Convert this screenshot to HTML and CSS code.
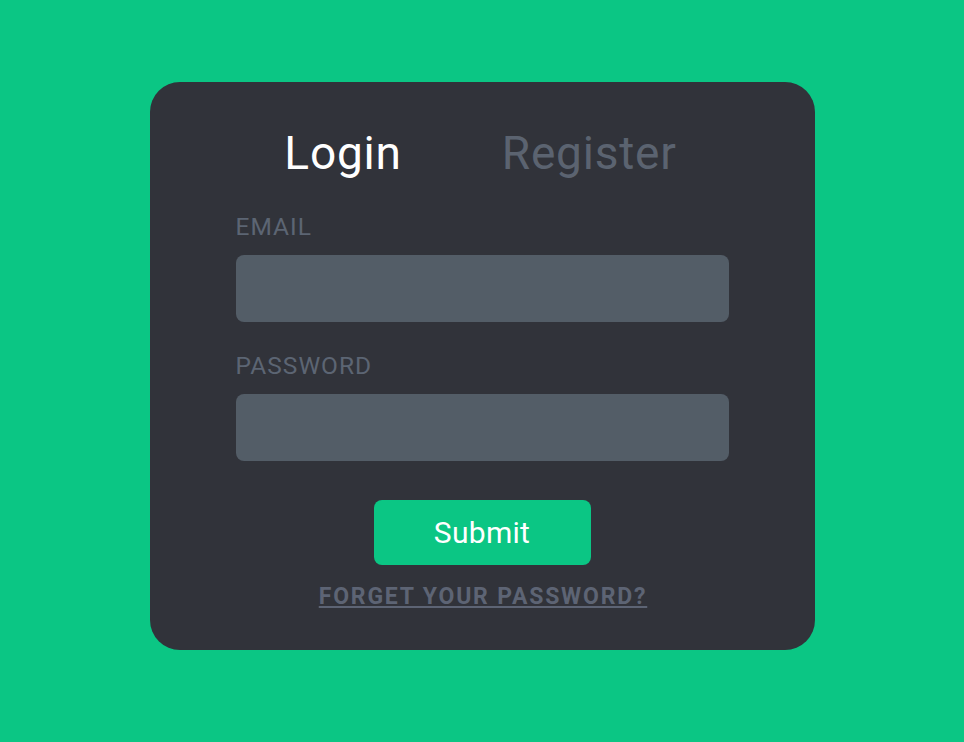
FILE: index.html
```html
<!DOCTYPE html>
<html lang="en">
<head>
  <meta charset="UTF-8">
  <meta name="viewport" content="width=device-width, initial-scale=1.0">
  <title>Login</title>

  <link rel="stylesheet" href="styles.css">

</head>
<body>

  <div class="card">
    <div class="tabs">
      <span class="tab active">Login</span>
      <span class="tab">Register</span>
    </div>

    <form class="form">
      <label class="label" for="email">EMAIL</label>
      <input class="input" id="email" type="text">

      <label class="label" for="password">PASSWORD</label>
      <input class="input" id="password" type="password">

      <button class="submit" type="button">Submit</button>
      <a class="forgot" href="#">FORGET YOUR PASSWORD?</a>
    </form>
  </div>

</body>
</html>
```

FILE: styles.css
```css
* {
  box-sizing: border-box;
}

html, body {
  margin: 0;
  height: 100%;
}

body {
  background-color: #0bc684;
  font-family: Roboto, "Liberation Sans", sans-serif;
  display: flex;
  justify-content: center;
  padding-top: 82px;
}

.card {
  width: 665px;
  height: 568px;
  background-color: #31333a;
  border-radius: 30px;
  padding: 44px 86px 0;
}

.tabs {
  display: flex;
  justify-content: center;
  gap: 100px;
  margin-left: -3px;
}

.tab {
  font-size: 46px;
  letter-spacing: 0.8px;
  color: #5b6370;
}

.tab.active {
  color: #ffffff;
}

.form {
  display: flex;
  flex-direction: column;
  margin-top: 32px;
}

.label {
  font-size: 24.5px;
  letter-spacing: 1px;
  color: #5c6573;
  margin-bottom: 14px;
}

.input {
  height: 67px;
  border: none;
  border-radius: 8px;
  background-color: #535d67;
  margin-bottom: 29px;
}

.submit {
  align-self: center;
  width: 217px;
  height: 65px;
  margin-top: 10px;
  border: none;
  border-radius: 8px;
  background-color: #0bc684;
  color: #ffffff;
  font-family: inherit;
  font-size: 30px;
  letter-spacing: 0.3px;
}

.forgot {
  align-self: center;
  margin-top: 18px;
  padding-left: 2px;
  font-size: 23px;
  font-weight: bold;
  letter-spacing: 1.8px;
  color: #5d6474;
  text-decoration: underline;
}
```
